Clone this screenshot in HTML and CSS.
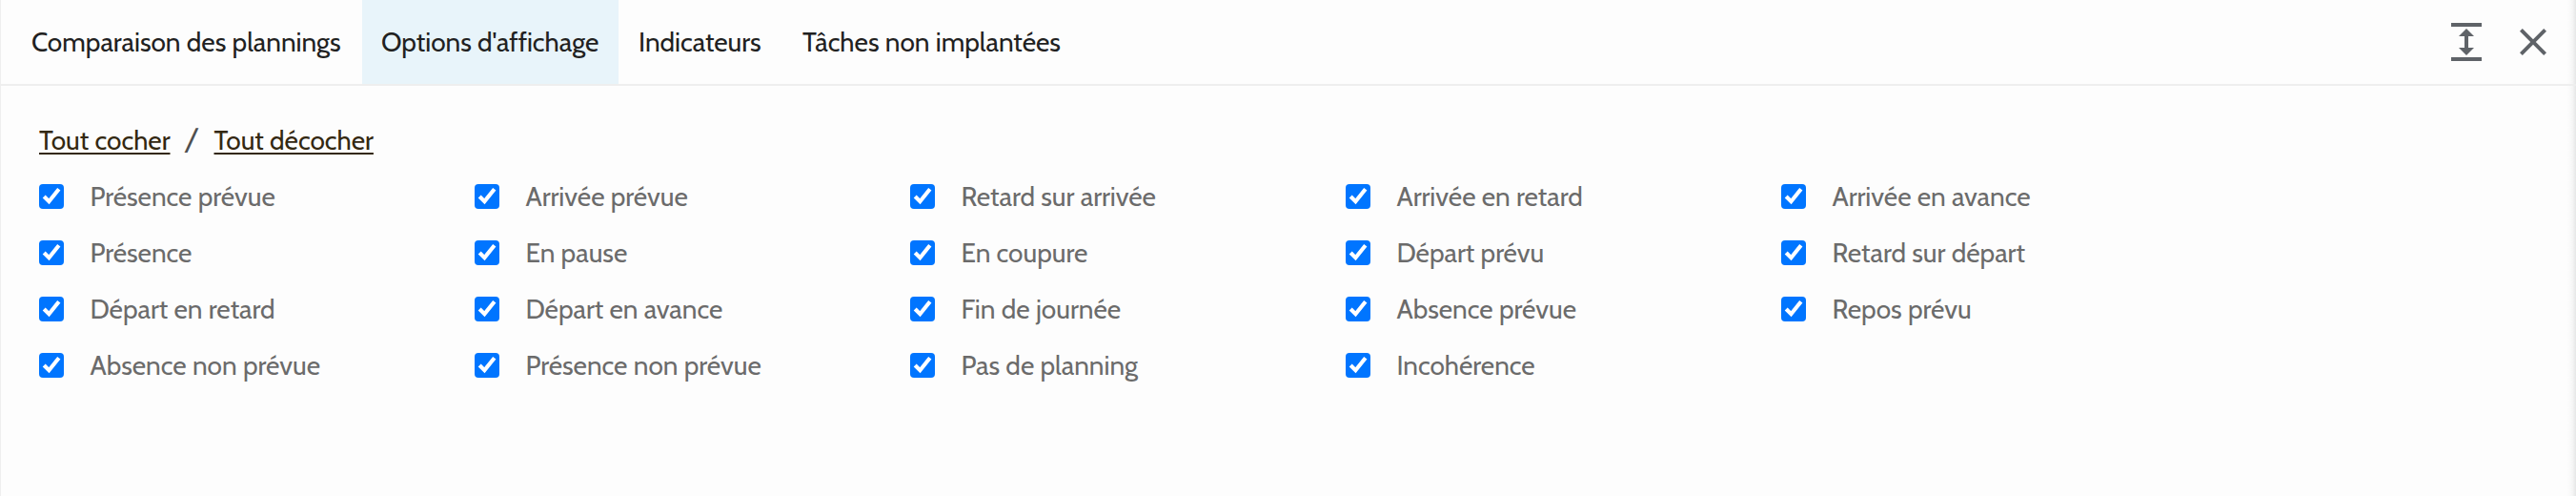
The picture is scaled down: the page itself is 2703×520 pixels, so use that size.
FILE: index.html
```html
<!DOCTYPE html>
<html lang="fr">
<head>
  <meta charset="utf-8">
  <title>Options d'affichage</title>
  <link rel="stylesheet" href="styles.css">
</head>
<body>
<div class="panel">
  <div class="header">
    <div class="tabs">
      <div class="tab tab-compare">Comparaison des plannings</div>
      <div class="tab tab-options active">Options d'affichage</div>
      <div class="tab tab-indic">Indicateurs</div>
      <div class="tab tab-tasks">Tâches non implantées</div>
    </div>
    <div class="actions">
      <svg class="icon" width="32" height="40" viewBox="0 0 32 40">
        <path d="M0 0h32v4H0zM0 36h32v4H0zM16 6l8 8h-6v12h6l-8 8-8-8h6V14H8z"/>
      </svg>
      <svg class="icon" width="28" height="28" viewBox="0 0 28 28">
        <path d="M28 2.8L25.2 0 14 11.2 2.8 0 0 2.8 11.2 14 0 25.2 2.8 28 14 16.8 25.2 28 28 25.2 16.8 14z"/>
      </svg>
    </div>
  </div>
  <div class="content">
    <div class="links">
      <a href="#">Tout cocher</a><span class="slash">/</span><a href="#">Tout décocher</a>
    </div>
    <div class="options">
      <label><input type="checkbox" checked><span>Présence prévue</span></label>
      <label><input type="checkbox" checked><span>Arrivée prévue</span></label>
      <label><input type="checkbox" checked><span>Retard sur arrivée</span></label>
      <label><input type="checkbox" checked><span>Arrivée en retard</span></label>
      <label><input type="checkbox" checked><span>Arrivée en avance</span></label>
      <label><input type="checkbox" checked><span>Présence</span></label>
      <label><input type="checkbox" checked><span>En pause</span></label>
      <label><input type="checkbox" checked><span>En coupure</span></label>
      <label><input type="checkbox" checked><span>Départ prévu</span></label>
      <label><input type="checkbox" checked><span>Retard sur départ</span></label>
      <label><input type="checkbox" checked><span>Départ en retard</span></label>
      <label><input type="checkbox" checked><span>Départ en avance</span></label>
      <label><input type="checkbox" checked><span>Fin de journée</span></label>
      <label><input type="checkbox" checked><span>Absence prévue</span></label>
      <label><input type="checkbox" checked><span>Repos prévu</span></label>
      <label><input type="checkbox" checked><span>Absence non prévue</span></label>
      <label><input type="checkbox" checked><span>Présence non prévue</span></label>
      <label><input type="checkbox" checked><span>Pas de planning</span></label>
      <label><input type="checkbox" checked><span>Incohérence</span></label>
    </div>
  </div>
</div>
</body>
</html>
```

FILE: styles.css
```css
* {
  box-sizing: border-box;
}
body {
  margin: 0;
  background-color: #fdfdfd;
  font-family: Cabin, Lato, sans-serif;
  font-size: 28px;
  color: #6b6b6b;
}
.panel {
  height: 520px;
  border-left: 1px solid #eee;
  overflow: hidden;
  background: linear-gradient(to left, #e6e7e7, #f6f6f6 4px, #fdfdfd 9px);
}
.header {
  display: flex;
  justify-content: space-between;
  height: 90px;
  border-bottom: 2px solid #eee;
}
.tabs {
  display: flex;
  padding-left: 11px;
  color: #212121;
}
.tab {
  padding-left: 21px;
  line-height: 88px;
  height: 88px;
  white-space: nowrap;
}
.tab-compare {
  width: 368px;
}
.tab-options {
  width: 269px;
  padding-left: 20px;
}
.tab-indic {
  width: 172px;
}
.tab.active {
  background-color: #e8f4fa;
}
.actions {
  display: flex;
  align-items: center;
  gap: 40px;
  padding-right: 31px;
}
.icon {
  fill: #5f6368;
}
.content {
  padding: 38px 0 0 40px;
}
.links {
  height: 49px;
  line-height: 38px;
  white-space: nowrap;
}
.links a {
  color: #332811;
  text-decoration: underline;
  text-decoration-thickness: 2px;
  text-underline-offset: 3px;
  text-decoration-skip-ink: none;
}
.slash {
  display: inline-block;
  width: 46px;
  font-family: "Open Sans", sans-serif;
  font-size: 36px;
  line-height: 24px;
  color: #505050;
  text-align: center;
  transform: translate(-1px, 3px) skewX(-5deg);
}
.options {
  display: grid;
  grid-template-columns: repeat(5, 457px);
  grid-auto-rows: 59px;
}
.options label {
  display: flex;
  align-items: center;
  height: 58px;
  white-space: nowrap;
}
.options input {
  zoom: 2;
  width: 13px;
  height: 13px;
  margin: 0 13.7px 0 0;
  accent-color: #0075ff;
}
.options span {
  line-height: 34px;
}
```
